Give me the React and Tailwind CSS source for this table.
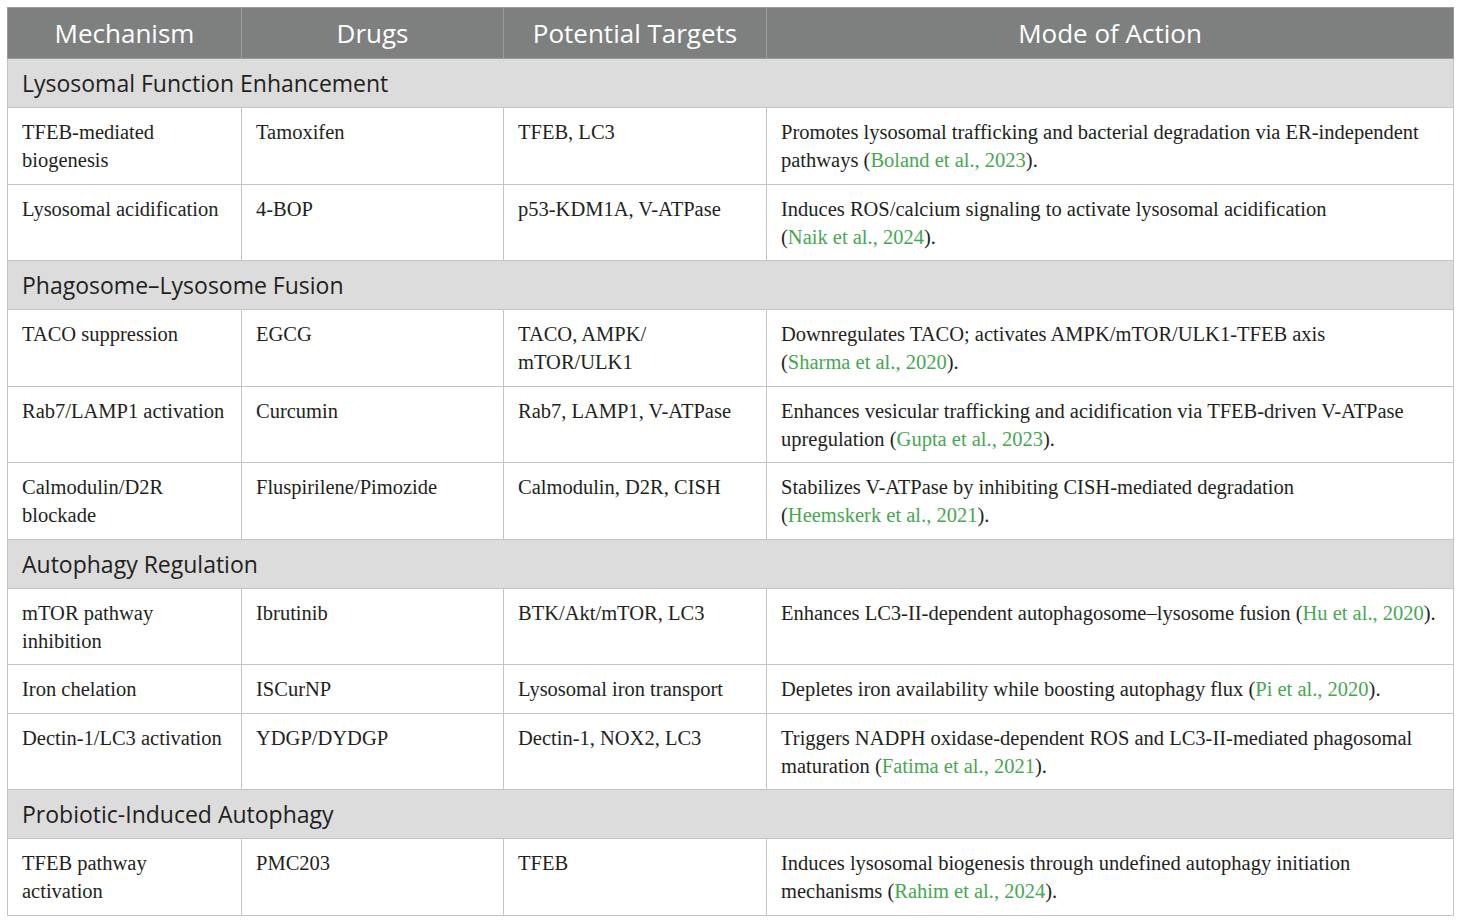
import React from 'react';

const L = ({ children }) => <span className="text-[#45a850]">{children}</span>;

const sections = [
  {
    title: 'Lysosomal Function Enhancement',
    rows: [
      {
        mech: <>TFEB-mediated<br />biogenesis</>,
        drug: 'Tamoxifen',
        target: 'TFEB, LC3',
        mode: <>Promotes lysosomal trafficking and bacterial degradation via ER-independent<br />pathways (<L>Boland et al., 2023</L>).</>,
      },
      {
        mech: 'Lysosomal acidification',
        drug: '4-BOP',
        target: 'p53-KDM1A, V-ATPase',
        mode: <>Induces ROS/calcium signaling to activate lysosomal acidification<br />(<L>Naik et al., 2024</L>).</>,
      },
    ],
  },
  {
    title: 'Phagosome\u2013Lysosome Fusion',
    rows: [
      {
        mech: 'TACO suppression',
        drug: 'EGCG',
        target: <>TACO, AMPK/<br />mTOR/ULK1</>,
        mode: <>Downregulates TACO; activates AMPK/mTOR/ULK1-TFEB axis<br />(<L>Sharma et al., 2020</L>).</>,
      },
      {
        mech: 'Rab7/LAMP1 activation',
        drug: 'Curcumin',
        target: 'Rab7, LAMP1, V-ATPase',
        mode: <>Enhances vesicular trafficking and acidification via TFEB-driven V-ATPase<br />upregulation (<L>Gupta et al., 2023</L>).</>,
      },
      {
        mech: <>Calmodulin/D2R<br />blockade</>,
        drug: 'Fluspirilene/Pimozide',
        target: 'Calmodulin, D2R, CISH',
        mode: <>Stabilizes V-ATPase by inhibiting CISH-mediated degradation<br />(<L>Heemskerk et al., 2021</L>).</>,
      },
    ],
  },
  {
    title: 'Autophagy Regulation',
    rows: [
      {
        mech: <>mTOR pathway<br />inhibition</>,
        drug: 'Ibrutinib',
        target: 'BTK/Akt/mTOR, LC3',
        mode: <>Enhances LC3-II-dependent autophagosome{'\u2013'}lysosome fusion (<L>Hu et al., 2020</L>).</>,
      },
      {
        mech: 'Iron chelation',
        drug: 'ISCurNP',
        target: 'Lysosomal iron transport',
        mode: <>Depletes iron availability while boosting autophagy flux (<L>Pi et al., 2020</L>).</>,
      },
      {
        mech: 'Dectin-1/LC3 activation',
        drug: 'YDGP/DYDGP',
        target: 'Dectin-1, NOX2, LC3',
        mode: <>Triggers NADPH oxidase-dependent ROS and LC3-II-mediated phagosomal<br />maturation (<L>Fatima et al., 2021</L>).</>,
      },
    ],
  },
  {
    title: 'Probiotic-Induced Autophagy',
    rows: [
      {
        mech: <>TFEB pathway<br />activation</>,
        drug: 'PMC203',
        target: 'TFEB',
        mode: <>Induces lysosomal biogenesis through undefined autophagy initiation<br />mechanisms (<L>Rahim et al., 2024</L>).</>,
      },
    ],
  },
];

const sans = "font-['Open_Sans','Noto_Sans',sans-serif]";
const serif = "font-['Liberation_Serif','Times_New_Roman',serif]";
const td = 'border border-[#c4c4c4] align-top whitespace-nowrap px-[14px] pt-[10px] pb-[9.5px] leading-[28px]';

export default function App() {
  return (
    <div className="bg-white w-[1460px] h-[922px] pt-[7px] pl-[7px]">
      <table className={`w-[1446px] border-collapse table-fixed ${serif} text-[20.5px] text-[#231f20]`}>
        <colgroup>
          <col className="w-[234px]" />
          <col className="w-[262px]" />
          <col className="w-[263px]" />
          <col className="w-[687px]" />
        </colgroup>
        <thead>
          <tr className="bg-[#7e807f] h-[51px]">
            {['Mechanism', 'Drugs', 'Potential Targets', 'Mode of Action'].map((h) => (
              <th
                key={h}
                className={`${sans} border border-[#9a9c9b] text-white font-normal text-[26px] leading-[30px] text-center align-middle`}
              >
                {h}
              </th>
            ))}
          </tr>
        </thead>
        <tbody>
          {sections.map((s) => (
            <React.Fragment key={s.title}>
              <tr className="bg-[#dcdcdc] h-[49px]">
                <td colSpan={4} className={`${sans} border border-[#c4c4c4] px-[14px] text-[23px] leading-[30px] text-[#231f20] align-middle`}>
                  {s.title}
                </td>
              </tr>
              {s.rows.map((r, i) => (
                <tr key={i}>
                  <td className={td}>{r.mech}</td>
                  <td className={td}>{r.drug}</td>
                  <td className={td}>{r.target}</td>
                  <td className={td}>{r.mode}</td>
                </tr>
              ))}
            </React.Fragment>
          ))}
        </tbody>
      </table>
    </div>
  );
}
